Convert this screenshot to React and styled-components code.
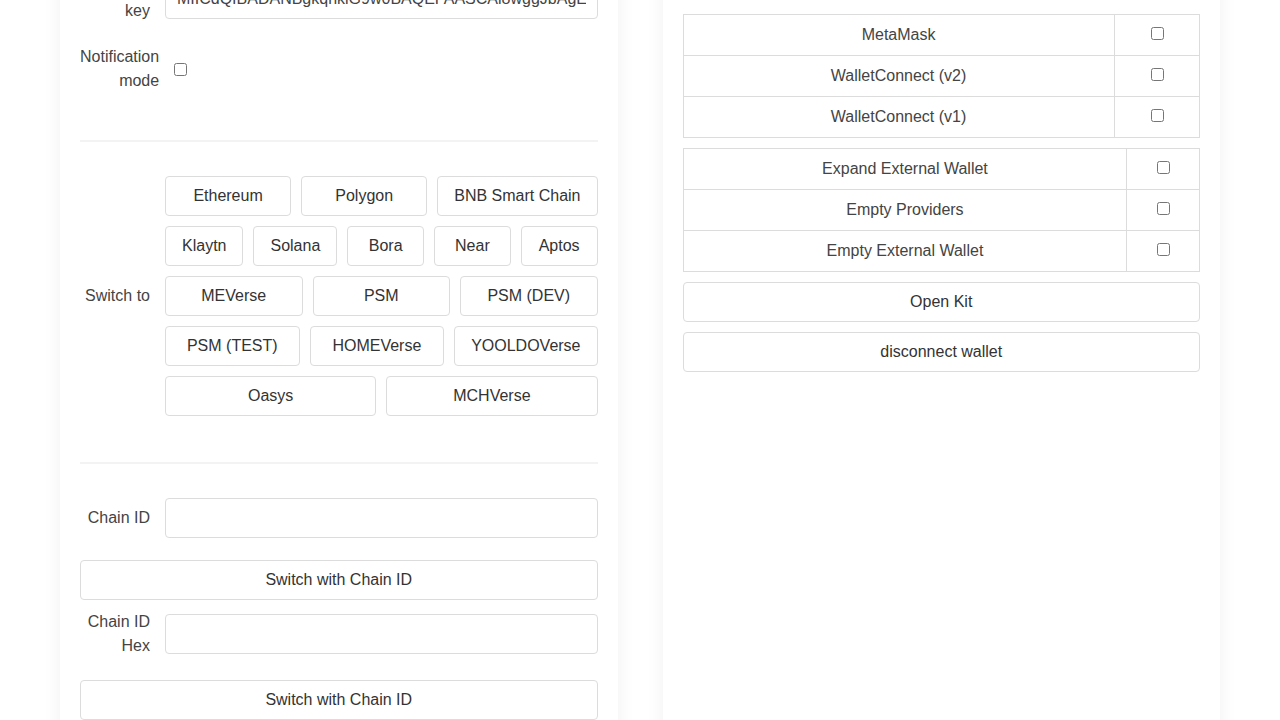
import React, { useLayoutEffect, useRef } from "react";
import styled, { createGlobalStyle } from "styled-components";

const GlobalStyle = createGlobalStyle`
  *, *::before, *::after { box-sizing: border-box; }
  html, body { margin: 0; padding: 0; background: #ffffff; }
  body {
    font-family: "Liberation Sans", Arial, sans-serif;
    font-size: 16px;
    line-height: 24px;
    color: #444;
  }
`;

const Viewport = styled.div`
  height: 100vh;
  overflow: hidden;
`;

const Columns = styled.div`
  display: grid;
  grid-template-columns: 1fr 1fr;
  gap: 45px;
  padding: 40px 60px;
`;

const Card = styled.section`
  background: #fff;
  box-shadow: 0 0 18px rgba(0, 0, 0, 0.06);
  padding: 20px;
  display: flex;
  flex-direction: column;
  gap: ${(p) => p.$gap || 0}px;
`;

const Row = styled.div`
  display: flex;
  align-items: center;
  margin-bottom: ${(p) => (p.$mb ?? 22)}px;
`;

const Label = styled.label`
  flex: 0 0 70px;
  margin-right: 15px;
  text-align: right;
  color: #444;
  line-height: 24px;
`;

const TextInput = styled.input`
  flex: 1 1 auto;
  min-width: 0;
  height: 40px;
  padding: 0 11px;
  border: 1px solid #dcdcdc;
  border-radius: 4px;
  font-family: inherit;
  font-size: 16px;
  color: #444;
  background: #fff;
  outline: none;
`;

const Check = styled.input.attrs({ type: "checkbox" })`
  margin: ${(p) => (p.$flush ? "0" : "3px 3px 3px 4px")};
  width: 13px;
  height: 13px;
`;

const Divider = styled.hr`
  border: none;
  height: 2px;
  background: #f3f3f3;
  margin: 25px 0 34px;
`;

const ChainGrid = styled.div`
  flex: 1 1 auto;
  display: flex;
  flex-direction: column;
  gap: 10px;
`;

const ChainLine = styled.div`
  display: flex;
  gap: 10px;
`;

const Button = styled.button`
  height: 40px;
  padding: 0 16px;
  border: 1px solid #dcdcdc;
  border-radius: 4px;
  background: #fff;
  font-family: inherit;
  font-size: 16px;
  line-height: 24px;
  color: #333;
  white-space: nowrap;
  cursor: pointer;
`;

const ChainButton = styled(Button)`
  flex: 1 1 0;
`;

const WideButton = styled(Button)`
  width: 100%;
  display: block;
  margin-bottom: ${(p) => (p.$mb ?? 0)}px;
`;

const Heading = styled.h2`
  margin: 0;
  font-size: 20px;
  line-height: 41px;
  font-weight: 600;
  color: #333;
`;

const Status = styled.p`
  margin: 0;
  line-height: 40px;
  color: #555;
`;

const Table = styled.table`
  width: 100%;
  border-collapse: collapse;
`;

const Cell = styled.td`
  border: 1px solid #dcdcdc;
  padding: 8px 3.75px;
  text-align: center;
  line-height: 24px;
  color: #444;
`;

const PRIVATE_KEY =
  "MIICdQIBADANBgkqhkiG9w0BAQEFAASCAl8wggJbAgEAAoGBAMUvY1xq9Zp8lWc3Kj2";

const CHAIN_LINES = [
  ["Ethereum", "Polygon", "BNB Smart Chain"],
  ["Klaytn", "Solana", "Bora", "Near", "Aptos"],
  ["MEVerse", "PSM", "PSM (DEV)"],
  ["PSM (TEST)", "HOMEVerse", "YOOLDOVerse"],
  ["Oasys", "MCHVerse"],
];

const WALLETS = ["MetaMask", "WalletConnect (v2)", "WalletConnect (v1)"];
const OPTIONS = ["Expand External Wallet", "Empty Providers", "Empty External Wallet"];

function OptionTable({ items }) {
  return (
    <Table>
      <tbody>
        {items.map((name) => (
          <tr key={name}>
            <Cell>{name}</Cell>
            <Cell>
              <Check />
            </Cell>
          </tr>
        ))}
      </tbody>
    </Table>
  );
}

export default function App() {
  const ref = useRef(null);
  useLayoutEffect(() => {
    if (ref.current) ref.current.scrollTop = 147;
  }, []);

  return (
    <Viewport ref={ref}>
      <GlobalStyle />
      <Columns>
        <Card>
          <Row>
            <Label>Client ID</Label>
            <TextInput defaultValue="b5f2c7e0-kit-demo" />
          </Row>
          <Row>
            <Label>Private key</Label>
            <TextInput defaultValue={PRIVATE_KEY} />
          </Row>
          <Row>
            <Label>Notification mode</Label>
            <Check $flush />
          </Row>
          <Divider />
          <Row $mb={21}>
            <Label>Switch to</Label>
            <ChainGrid>
              {CHAIN_LINES.map((line, i) => (
                <ChainLine key={i}>
                  {line.map((c) => (
                    <ChainButton key={c}>{c}</ChainButton>
                  ))}
                </ChainLine>
              ))}
            </ChainGrid>
          </Row>
          <Divider />
          <Row>
            <Label>Chain ID</Label>
            <TextInput />
          </Row>
          <WideButton $mb={10}>Switch with Chain ID</WideButton>
          <Row>
            <Label>Chain ID Hex</Label>
            <TextInput />
          </Row>
          <WideButton>Switch with Chain ID</WideButton>
          <Divider />
          <Row>
            <Label>Message</Label>
            <TextInput />
          </Row>
          <WideButton>Sign message</WideButton>
        </Card>

        <Card $gap={10}>
          <Heading>Wallet Kit</Heading>
          <Status>Not connected</Status>
          <OptionTable items={WALLETS} />
          <OptionTable items={OPTIONS} />
          <WideButton>Open Kit</WideButton>
          <WideButton>disconnect wallet</WideButton>
        </Card>
      </Columns>
    </Viewport>
  );
}
